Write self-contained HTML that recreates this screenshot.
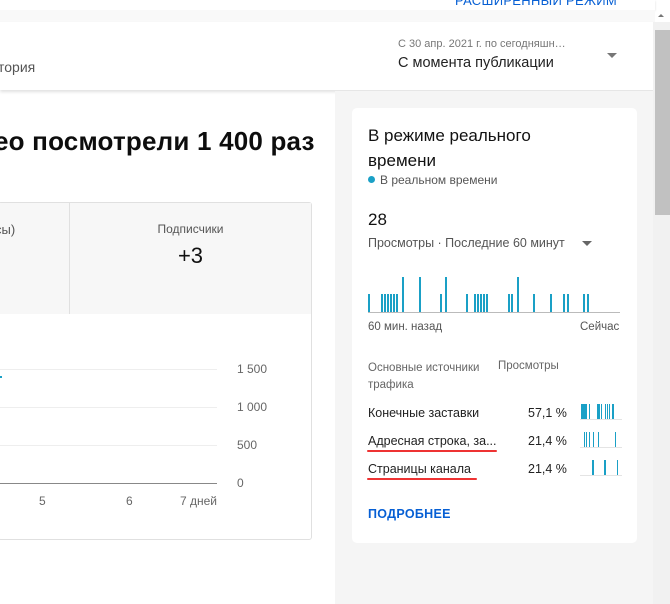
<!DOCTYPE html>
<html><head><meta charset="utf-8"><style>
*{margin:0;padding:0;box-sizing:border-box}
body{width:670px;height:604px;overflow:hidden;background:#fff;font-family:"Liberation Sans","DejaVu Sans",sans-serif;position:relative;color:#0d0d0d}
.a{position:absolute}
.bar{position:absolute;background:#1aa0c6;width:2px}
</style></head><body>
<div class="a" style="left:0;top:0;width:655px;height:10px;background:#fff;box-shadow:0 1px 2px rgba(0,0,0,.15)"></div>
<div class="a" style="left:455px;top:-7px;font-size:13px;color:#065fd4;letter-spacing:.3px">РАСШИРЕННЫЙ РЕЖИМ</div>
<div class="a" style="left:0;top:10px;width:655px;height:12px;background:#f9f9f9"></div>
<div class="a" style="left:0;top:22px;width:655px;height:68px;background:#fff;box-shadow:0 2px 3px rgba(0,0,0,.12)"></div>
<div class="a" style="left:-2px;top:59px;font-size:14px;color:#555">тория</div>
<div class="a" style="left:398px;top:38px;font-size:11px;color:#777">С 30 апр. 2021 г. по сегодняшн…</div>
<div class="a" style="left:398px;top:55px;font-size:14.5px;color:#222">С момента публикации</div>
<div class="a" style="left:607px;top:53px;width:0;height:0;border-left:5px solid transparent;border-right:5px solid transparent;border-top:5px solid #777"></div>
<div class="a" style="left:335px;top:91px;width:320px;height:513px;background:#f5f5f5"></div>
<div class="a" style="left:653px;top:22px;width:17px;height:582px;background:#f1f1f1"></div>
<div class="a" style="left:655px;top:30px;width:15px;height:185px;background:#c1c1c1"></div>
<div class="a" style="left:658px;top:14px;width:0;height:0;border-left:3px solid transparent;border-right:3px solid transparent;border-bottom:3px solid #777"></div>
<div class="a" style="left:-6px;top:126px;font-size:26px;font-weight:bold;color:#0d0d0d;letter-spacing:0.2px">ео посмотрели 1 400 раз</div>
<div class="a" style="left:-2px;top:202px;width:314px;height:338px;border:1px solid #e0e0e0;border-radius:3px;background:#fff"></div>
<div class="a" style="left:-1px;top:203px;width:312px;height:111px;background:#f7f7f7"></div>
<div class="a" style="left:69px;top:203px;width:1px;height:111px;background:#e0e0e0"></div>
<div class="a" style="left:-5px;top:222px;font-size:13px;color:#555">сы)</div>
<div class="a" style="left:70px;top:222px;width:241px;text-align:center;font-size:12px;color:#555">Подписчики</div>
<div class="a" style="left:70px;top:243px;width:241px;text-align:center;font-size:22px;color:#111">+3</div>
<div class="a" style="left:0;top:369px;width:217px;height:1px;background:#eee"></div>
<div class="a" style="left:0;top:407px;width:217px;height:1px;background:#eee"></div>
<div class="a" style="left:0;top:445px;width:217px;height:1px;background:#eee"></div>
<div class="a" style="left:0;top:483px;width:217px;height:1px;background:#888"></div>
<div class="a" style="left:0;top:376px;width:2px;height:2px;background:#1aa0c6"></div>
<div class="a" style="left:237px;top:362px;font-size:12px;color:#666">1 500</div>
<div class="a" style="left:237px;top:400px;font-size:12px;color:#666">1 000</div>
<div class="a" style="left:237px;top:438px;font-size:12px;color:#666">500</div>
<div class="a" style="left:237px;top:476px;font-size:12px;color:#666">0</div>
<div class="a" style="left:39px;top:494px;font-size:12px;color:#666">5</div>
<div class="a" style="left:126px;top:494px;font-size:12px;color:#666">6</div>
<div class="a" style="left:180px;top:494px;font-size:12px;color:#666">7 дней</div>
<div class="a" style="left:352px;top:108px;width:285px;height:435px;background:#fff;border-radius:5px"></div>
<div class="a" style="left:368px;top:123px;font-size:17px;line-height:25px;color:#111">В режиме реального<br>времени</div>
<div class="a" style="left:368px;top:176px;width:7px;height:7px;border-radius:50%;background:#1aa0c6"></div>
<div class="a" style="left:380px;top:173px;font-size:12px;color:#555">В реальном времени</div>
<div class="a" style="left:368px;top:210px;font-size:17px;color:#111">28</div>
<div class="a" style="left:368px;top:236px;font-size:12.5px;color:#555">Просмотры · Последние 60 минут</div>
<div class="a" style="left:582px;top:241px;width:0;height:0;border-left:5px solid transparent;border-right:5px solid transparent;border-top:5px solid #666"></div>
<div class="a" style="left:368px;top:312px;width:252px;height:1px;background:#bbb"></div>
<div class="bar" style="left:368px;top:294px;height:18px"></div>
<div class="bar" style="left:381px;top:294px;height:18px"></div>
<div class="bar" style="left:384px;top:294px;height:18px"></div>
<div class="bar" style="left:387px;top:294px;height:18px"></div>
<div class="bar" style="left:390px;top:294px;height:18px"></div>
<div class="bar" style="left:393px;top:294px;height:18px"></div>
<div class="bar" style="left:396px;top:294px;height:18px"></div>
<div class="bar" style="left:402px;top:277px;height:35px"></div>
<div class="bar" style="left:419px;top:277px;height:35px"></div>
<div class="bar" style="left:440px;top:294px;height:18px"></div>
<div class="bar" style="left:445px;top:277px;height:35px"></div>
<div class="bar" style="left:466px;top:294px;height:18px"></div>
<div class="bar" style="left:474px;top:294px;height:18px"></div>
<div class="bar" style="left:477px;top:294px;height:18px"></div>
<div class="bar" style="left:480px;top:294px;height:18px"></div>
<div class="bar" style="left:483px;top:294px;height:18px"></div>
<div class="bar" style="left:486px;top:294px;height:18px"></div>
<div class="bar" style="left:508px;top:294px;height:18px"></div>
<div class="bar" style="left:511px;top:294px;height:18px"></div>
<div class="bar" style="left:517px;top:277px;height:35px"></div>
<div class="bar" style="left:533px;top:294px;height:18px"></div>
<div class="bar" style="left:550px;top:294px;height:18px"></div>
<div class="bar" style="left:563px;top:294px;height:18px"></div>
<div class="bar" style="left:567px;top:294px;height:18px"></div>
<div class="bar" style="left:583px;top:294px;height:18px"></div>
<div class="bar" style="left:587px;top:294px;height:18px"></div>
<div class="a" style="left:368px;top:321px;font-size:11.5px;color:#555">60 мин. назад</div>
<div class="a" style="left:580px;top:321px;font-size:11.5px;color:#555">Сейчас</div>
<div class="a" style="left:368px;top:360px;font-size:11.5px;line-height:17px;color:#666">Основные источники<br>трафика</div>
<div class="a" style="left:498px;top:360px;font-size:11.5px;color:#666">Просмотры</div>
<div class="a" style="left:368px;top:406px;font-size:12.5px;color:#222">Конечные заставки</div>
<div class="a" style="left:528px;top:406px;font-size:12.5px;color:#222">57,1 %</div>
<div class="a" style="left:368px;top:434px;font-size:12.5px;color:#222">Адресная строка, за...</div>
<div class="a" style="left:528px;top:434px;font-size:12.5px;color:#222">21,4 %</div>
<div class="a" style="left:367px;top:450px;width:130px;height:2px;background:#e33;border-radius:1px"></div>
<div class="a" style="left:368px;top:462px;font-size:12.5px;color:#222">Страницы канала</div>
<div class="a" style="left:528px;top:462px;font-size:12.5px;color:#222">21,4 %</div>
<div class="a" style="left:367px;top:478px;width:110px;height:2px;background:#e33;border-radius:1px"></div>
<div class="a" style="left:580px;top:419px;width:42px;height:1px;background:#e4e4e4"></div>
<div class="a" style="left:580px;top:447px;width:42px;height:1px;background:#e4e4e4"></div>
<div class="a" style="left:580px;top:475px;width:42px;height:1px;background:#e4e4e4"></div>
<div class="bar" style="left:581px;top:404px;height:15px;width:6px"></div>
<div class="bar" style="left:589px;top:404px;height:15px;width:1px"></div>
<div class="bar" style="left:597px;top:404px;height:15px;width:3px"></div>
<div class="bar" style="left:601px;top:404px;height:15px;width:1px"></div>
<div class="bar" style="left:605px;top:404px;height:15px;width:1px"></div>
<div class="bar" style="left:607px;top:404px;height:15px;width:1px"></div>
<div class="bar" style="left:609px;top:404px;height:15px;width:1px"></div>
<div class="bar" style="left:612px;top:404px;height:15px;width:2px"></div>
<div class="bar" style="left:584px;top:432px;height:15px;width:1px"></div>
<div class="bar" style="left:586px;top:432px;height:15px;width:1px"></div>
<div class="bar" style="left:589px;top:432px;height:15px;width:1px"></div>
<div class="bar" style="left:593px;top:432px;height:15px;width:1px"></div>
<div class="bar" style="left:598px;top:432px;height:15px;width:1px"></div>
<div class="bar" style="left:615px;top:432px;height:15px;width:1px"></div>
<div class="bar" style="left:592px;top:460px;height:15px"></div>
<div class="bar" style="left:604px;top:460px;height:15px"></div>
<div class="bar" style="left:617px;top:460px;height:15px;width:1px"></div>
<div class="a" style="left:368px;top:507px;font-size:12.5px;font-weight:bold;color:#065fd4;letter-spacing:.3px">ПОДРОБНЕЕ</div>
</body></html>
